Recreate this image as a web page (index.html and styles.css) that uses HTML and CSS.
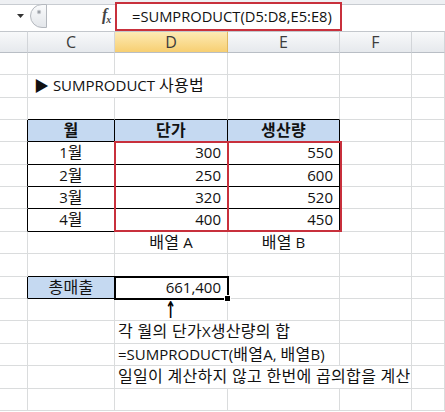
FILE: index.html
```html
<!DOCTYPE html>
<html lang="ko">
<head>
<meta charset="utf-8">
<link rel="stylesheet" href="styles.css">
</head>
<body>
<div class="app">
  <div class="fbar">
    <div class="namebox">
      <svg class="caret" width="7" height="4" viewBox="0 0 7 4"><path d="M0 0H7L3.5 4Z" fill="#333"/></svg>
    </div>
    <div class="knob">
      <svg width="17" height="24" viewBox="0 0 17 24"><defs><linearGradient id="kg" x1="0" y1="0" x2="0" y2="1"><stop offset="0" stop-color="#fafbfc"/><stop offset="1" stop-color="#e3e6ea"/></linearGradient></defs><path d="M16.5 0.5H12A11.5 11.5 0 0 0 12 23.5H16.5Z" fill="url(#kg)" stroke="#b4b8be"/><circle cx="9" cy="8" r="2.2" fill="#c3c6cb"/><circle cx="9" cy="8" r="1" fill="#8e939a"/></svg>
    </div>
    <div class="gap"></div>
    <div class="fx"><span class="fx-f">f</span><span class="fx-x">x</span></div>
    <div class="formula">=SUMPRODUCT(D5:D8,E5:E8)</div>
    <div class="frest"></div>
  </div>
  <div class="heads">
    <div class="h"></div>
    <div class="h">C</div>
    <div class="h sel">D</div>
    <div class="h">E</div>
    <div class="h">F</div>
    <div class="h"></div>
  </div>
  <div class="sheet">
    <!-- row 1 -->
    <div class="c"></div><div class="c"></div><div class="c"></div><div class="c"></div><div class="c"></div><div class="c"></div>
    <!-- row 2 -->
    <div class="c"></div><div class="c span2 title">▶ SUMPRODUCT <span class="k">사용법</span></div><div class="c"></div><div class="c"></div><div class="c"></div>
    <!-- row 3 -->
    <div class="c"></div><div class="c kb"></div><div class="c kb"></div><div class="c kb"></div><div class="c"></div><div class="c"></div>
    <!-- row 4 -->
    <div class="c kr"></div><div class="c kb kr hd"><span class="k">월</span></div><div class="c kb kr hd"><span class="k">단가</span></div><div class="c kb kr hd"><span class="k">생산량</span></div><div class="c"></div><div class="c"></div>
    <!-- row 5 -->
    <div class="c kr"></div><div class="c kb kr mid">1<span class="k">월</span></div><div class="c kb kr num">300</div><div class="c kb kr num">550</div><div class="c"></div><div class="c"></div>
    <!-- row 6 -->
    <div class="c kr"></div><div class="c kb kr mid">2<span class="k">월</span></div><div class="c kb kr num">250</div><div class="c kb kr num">600</div><div class="c"></div><div class="c"></div>
    <!-- row 7 -->
    <div class="c kr"></div><div class="c kb kr mid">3<span class="k">월</span></div><div class="c kb kr num">320</div><div class="c kb kr num">520</div><div class="c"></div><div class="c"></div>
    <!-- row 8 -->
    <div class="c kr"></div><div class="c kb kr mid">4<span class="k">월</span></div><div class="c kb kr num">400</div><div class="c kb kr num">450</div><div class="c"></div><div class="c"></div>
    <!-- row 9 -->
    <div class="c"></div><div class="c"></div><div class="c mid"><span class="k">배열</span> A</div><div class="c mid"><span class="k">배열</span> B</div><div class="c"></div><div class="c"></div>
    <!-- row 10 -->
    <div class="c"></div><div class="c kb"></div><div class="c"></div><div class="c"></div><div class="c"></div><div class="c"></div>
    <!-- row 11 -->
    <div class="c kr"></div><div class="c kb kr hd plain"><span class="k">총매출</span></div><div class="c kb kr num">661,400</div><div class="c"></div><div class="c"></div><div class="c"></div>
    <!-- row 12 -->
    <div class="c"></div><div class="c"></div><div class="c mid"><span class="arrow">↑</span></div><div class="c"></div><div class="c"></div><div class="c"></div>
    <!-- row 13 -->
    <div class="c"></div><div class="c"></div><div class="c span2 note"><span class="k">각 월의 단가</span>X<span class="k">생산량의 합</span></div><div class="c"></div><div class="c"></div>
    <!-- row 14 -->
    <div class="c"></div><div class="c"></div><div class="c span2 note">=SUMPRODUCT(<span class="k">배열</span>A, <span class="k">배열</span>B)</div><div class="c"></div><div class="c"></div>
    <!-- row 15 -->
    <div class="c"></div><div class="c"></div><div class="c span3 note"><span class="k">일일이 계산하지 않고 한번에 곱의합을 계산</span></div><div class="c"></div>
    <!-- row 16 -->
    <div class="c"></div><div class="c"></div><div class="c"></div><div class="c"></div><div class="c"></div><div class="c"></div>

    <div class="redbox boxd"></div>
    <div class="redbox boxe"></div>
    <div class="selbox"><span class="handle"></span></div>
  </div>
</div>
</body>
</html>
```
FILE: styles.css
```css
html, body {
  margin: 0;
  padding: 0;
  background: #fff;
  overflow: hidden;
}
.app {
  width: 445px;
  height: 412px;
  overflow: hidden;
  font-family: "Open Sans", "Noto Sans CJK KR", sans-serif;
  color: #111;
}
.fbar {
  height: 31px;
  display: flex;
  background: linear-gradient(#eef0f3 0 4px, #c8ccd1 4px 5px, #fff 5px);
}
.namebox {
  width: 30px;
  display: flex;
  align-items: flex-start;
  justify-content: flex-end;
  padding-top: 14px;
  padding-right: 6px;
  box-sizing: border-box;
}
.knob {
  width: 17px;
  padding-top: 4px;
}
.gap { width: 55px; }
.fx {
  width: 13px;
  font-family: "Liberation Serif", serif;
  font-style: italic;
  font-weight: bold;
  color: #444;
  display: flex;
  align-items: flex-start;
  padding-top: 7px;
}
.fx-f { font-size: 16px; line-height: 16px; }
.fx-x { font-size: 10px; line-height: 10px; margin-top: 8px; margin-left: -1px; }
.formula {
  width: 227px;
  height: 29px;
  margin-top: 2px;
  box-sizing: border-box;
  border: 2px solid #c8303c;
  background: #fff;
  font-size: 14.7px;
  line-height: 24px;
  padding-left: 15px;
  color: #111;
  white-space: nowrap;
}
.frest { flex: 1; }

.heads {
  display: grid;
  grid-template-columns: 28px 87px 113px 112px 72px 33px;
  height: 22px;
}
.h {
  box-sizing: border-box;
  border-top: 1px solid #c3c7cc;
  border-right: 1px solid #d2d5d9;
  border-bottom: 1px solid #b9bec5;
  background: linear-gradient(#f8f9fa, #e6e9ed);
  font-size: 16px;
  line-height: 20px;
  text-align: center;
  color: #3c3c3c;
}
.h.sel {
  background: linear-gradient(#fdeab4, #f7cf72);
  border-right-color: #e0b860;
}

.sheet {
  position: relative;
  display: grid;
  grid-template-columns: 28px 87px 113px 112px 72px 33px;
  grid-template-rows: 22px 23px 22px 22px 23px 22px 22px 23px 22px 23px 22px 22px 23px 22px 23px 22px;
}
.c {
  box-sizing: border-box;
  border-right: 1px solid #dadcdd;
  border-bottom: 1px solid #dadcdd;
  font-size: 15px;
  line-height: 21px;
  white-space: nowrap;
  padding: 0 4px;
  overflow: visible;
  min-width: 0;
}
.k {
  font-size: 16px;
  letter-spacing: 0.3px;
}
.span2 { grid-column: span 2; }
.span3 { grid-column: span 3; }
.kb { border-bottom-color: #000; }
.kr { border-right-color: #000; }
.hd {
  background: #c5d9f1;
  text-align: center;
  font-weight: bold;
}
.hd.plain { font-weight: normal; }
.mid { text-align: center; }
.num { text-align: right; padding-right: 6px; }
.title { padding-left: 6px; }
.note { padding-left: 3px; }
.arrow {
  display: inline-block;
  font-family: "DejaVu Sans", sans-serif;
  font-size: 16px;
  font-weight: bold;
  line-height: 21px;
  color: #000;
  transform: translateY(1px) scale(0.8, 1.45);
}

/* overlays: highlight frames and the active-cell frame */
.redbox {
  position: absolute;
  box-sizing: border-box;
  border: 2px solid #c8303c;
  top: 88px;
  height: 91px;
}
.boxd { left: 114px; width: 115px; }
.boxe { left: 227px; width: 115px; }
.selbox {
  position: absolute;
  box-sizing: border-box;
  left: 114px;
  top: 223px;
  width: 115px;
  height: 24px;
  border: 2px solid #000;
}
.handle {
  position: absolute;
  right: -4px;
  bottom: -4px;
  width: 5px;
  height: 5px;
  background: #000;
  border: 1px solid #fff;
}
```
